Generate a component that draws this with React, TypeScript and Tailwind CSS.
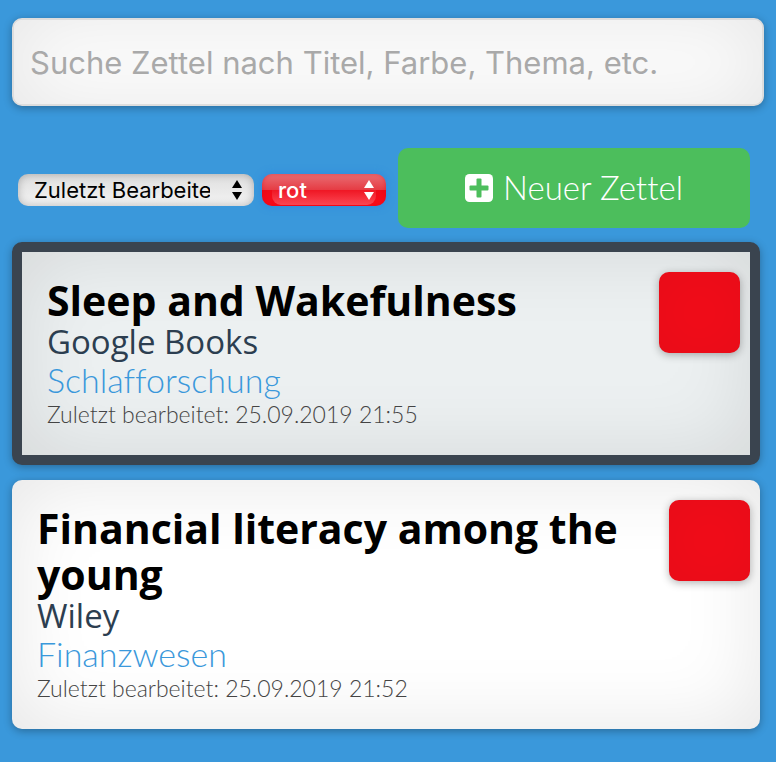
type Note = {
  title: string;
  source: string;
  topic: string;
  edited: string;
  selected: boolean;
};

const notes: Note[] = [
  {
    title: "Sleep and Wakefulness",
    source: "Google Books",
    topic: "Schlafforschung",
    edited: "25.09.2019 21:55",
    selected: true,
  },
  {
    title: "Financial literacy among the young",
    source: "Wiley",
    topic: "Finanzwesen",
    edited: "25.09.2019 21:52",
    selected: false,
  },
];

function Arrows() {
  return (
    <svg
      viewBox="0 0 10 20"
      className="pointer-events-none absolute top-1.5 right-3 h-5 w-2.5"
      fill="currentColor"
      aria-hidden="true"
    >
      <path d="M5 0 10 8H0zM5 20 0 12h10z" />
    </svg>
  );
}

function PlusSquare() {
  return (
    <svg viewBox="0 0 28 28" className="size-7" aria-hidden="true">
      <rect width="28" height="28" rx="4.5" fill="#fff" />
      <rect x="4.5" y="11.5" width="19" height="5" rx="1" fill="#4cbe5c" />
      <rect x="11.5" y="4.5" width="5" height="19" rx="1" fill="#4cbe5c" />
    </svg>
  );
}

function NoteCard({ note }: { note: Note }) {
  return (
    <article
      className={`flex items-start rounded-[10px] shadow-[0_2px_8px_rgba(0,0,0,0.3),inset_0_0_80px_rgba(0,0,0,0.1)] ${
        note.selected ? "border-10 border-[#3a444f] bg-[#ecf0f1]" : "bg-white"
      }`}
    >
      <div className="min-w-0 flex-1 py-[25px] pl-[25px]">
        <h2 className="font-['Open_Sans','Noto_Sans',sans-serif] text-[41px] leading-[46px] font-bold text-black">
          {note.title}
        </h2>
        <p className="font-['Open_Sans','Noto_Sans',sans-serif] text-[33px] leading-[38px] text-[#2c3e50]">
          {note.source}
        </p>
        <p className="font-[Lato,sans-serif] text-[34px] leading-[38px] font-light text-[#3a98db] [font-variant-ligatures:none]">
          {note.topic}
        </p>
        <p className="font-[Lato,sans-serif] text-[23px] leading-[31px] font-light text-[#444]">
          Zuletzt bearbeitet: {note.edited}
        </p>
      </div>
      <div className="mt-5 mr-2.5 size-[81px] shrink-0 rounded-[10px] bg-[#fc0d1a] shadow-[0_2px_8px_rgba(0,0,0,0.3),inset_0_0_80px_rgba(0,0,0,0.1)]" />
    </article>
  );
}

export default function App() {
  return (
    <main className="min-h-screen bg-[#3a98db] pt-[18px] pb-8">
      <div className="px-3">
        <input
          type="search"
          aria-label="Suche Zettel"
          placeholder="Suche Zettel nach Titel, Farbe, Thema, etc."
          className="block h-[88px] w-full appearance-none rounded-[10px] border-2 border-[#dddddd] bg-white px-4 font-[Inter,sans-serif] text-[31px] text-black shadow-[0_2px_8px_rgba(0,0,0,0.3),inset_0_0_80px_rgba(0,0,0,0.1)] outline-none placeholder:text-[#a9a9a9]"
        />
      </div>

      <div className="mt-[42px] flex items-center pr-[26px] pl-[18px]">
        <div className="flex gap-2 pt-1">
          <div className="relative w-[236px] text-black">
            <select
              aria-label="Sortierung"
              className="block h-8 w-full appearance-none rounded-[10px] bg-linear-to-b from-[#dedede] to-[#f4f4f4] pr-11 pl-4 font-[Inter,sans-serif] text-[22px] shadow-[inset_0_0_8px_rgba(0,0,0,0.25)]"
            >
              <option>Zuletzt Bearbeitet</option>
            </select>
            <Arrows />
          </div>
          <div className="relative w-[124px] text-white">
            <select
              aria-label="Farbe"
              className="block h-8 w-full appearance-none rounded-[10px] bg-[linear-gradient(to_bottom,#e86e74_0%,#e63c44_49%,#ee0a18_50%,#fb0a1a_100%)] pl-4 font-[Inter,sans-serif] text-[22px] font-medium shadow-[0_0_6px_2px_rgba(45,135,225,0.6),inset_0_0_4px_rgba(215,0,15,0.4)]"
            >
              <option>rot</option>
            </select>
            <span className="pointer-events-none absolute inset-x-2.5 bottom-px h-[15px] rounded-b-[9px] bg-linear-to-b from-white/5 to-white/25" />
            <Arrows />
          </div>
        </div>
        <button
          type="button"
          className="ml-3 flex h-20 flex-1 items-center justify-center gap-2.5 rounded-[10px] bg-[#4cbe5c] font-[Lato,sans-serif] text-[33px] font-light text-white [font-variant-ligatures:none]"
        >
          <PlusSquare />
          <span>Neuer Zettel</span>
        </button>
      </div>

      <div className="mt-3.5 flex flex-col gap-[15px] pr-4 pl-3">
        {notes.map((note) => (
          <NoteCard key={note.title} note={note} />
        ))}
      </div>
    </main>
  );
}
